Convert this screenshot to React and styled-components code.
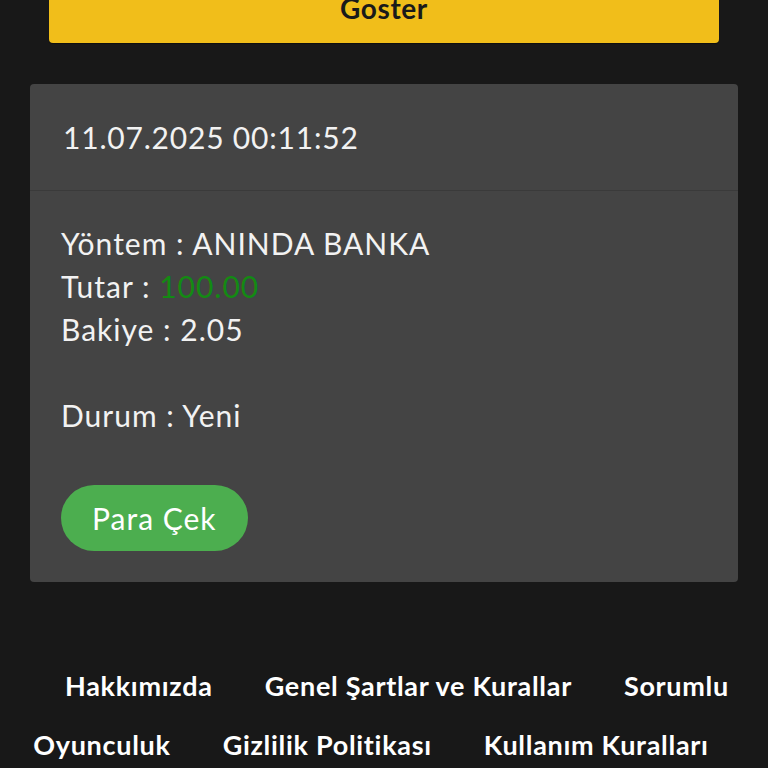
import React from 'react'
import styled, { createGlobalStyle } from 'styled-components'

const GlobalStyle = createGlobalStyle`
  html, body {
    margin: 0;
    padding: 0;
    background: #181818;
    font-family: Lato, "Noto Sans", sans-serif;
    overflow: hidden;
  }
`

const Page = styled.div`
  width: 768px;
  height: 768px;
  overflow: hidden;
  display: flex;
  flex-direction: column;
  & > * {
    flex-shrink: 0;
  }
`

const ShowButton = styled.button`
  margin: -27px 49px 0;
  height: 70px;
  border: none;
  border-radius: 4px;
  background: #f1be1a;
  color: #1a1a1a;
  font-family: inherit;
  font-size: 28px;
  font-weight: 700;
  letter-spacing: 0.6px;
  padding: 0;
  display: flex;
  align-items: center;
  justify-content: center;
  box-shadow: 0 1px 1px rgba(0, 0, 0, 0.4);
`

const Card = styled.section`
  margin: 41px 30px 0;
  background: #444444;
  border-radius: 4px;
  color: #f2f2f2;
  letter-spacing: 0.8px;
`

const CardHeader = styled.div`
  height: 106px;
  padding: 0 33px;
  display: flex;
  align-items: center;
  font-size: 30px;
  border-bottom: 1px solid #3a3a3a;
`

const CardBody = styled.div`
  padding: 31px 31px 31px;
`

const InfoLine = styled.div`
  font-size: 30px;
  line-height: 43px;
  height: 43px;
  letter-spacing: 1px;
`

const Amount = styled.span`
  color: #138a13;
`

const Spacer = styled.div`
  height: 43px;
`

const WithdrawButton = styled.button`
  margin-top: 48px;
  height: 66px;
  padding: 0 31px;
  border: none;
  border-radius: 33px;
  background: #4cae4f;
  color: #ffffff;
  font-family: inherit;
  font-size: 30px;
  letter-spacing: 1px;
  display: block;
`

const Footer = styled.nav`
  margin-top: 74px;
  padding: 0 20px;
  text-align: center;
  font-size: 27px;
  line-height: 59px;
`

// $start / $end drop the outer margin on a link that is split over two lines
const FooterLink = styled.a`
  display: inline-block;
  color: #ffffff;
  font-size: 27px;
  line-height: 59px;
  font-weight: 700;
  letter-spacing: 0.7px;
  margin: 0 ${(p) => (p.$end ? 0 : 26)}px 0 ${(p) => (p.$start ? 0 : 26)}px;
  text-decoration: none;
`

export default function App() {
  return (
    <Page>
      <GlobalStyle />
      <ShowButton type="button">Goster</ShowButton>
      <Card>
        <CardHeader>11.07.2025 00:11:52</CardHeader>
        <CardBody>
          <InfoLine>Yöntem : ANINDA BANKA</InfoLine>
          <InfoLine>
            Tutar : <Amount>100.00</Amount>
          </InfoLine>
          <InfoLine>Bakiye : 2.05</InfoLine>
          <Spacer />
          <InfoLine>Durum : Yeni</InfoLine>
          <WithdrawButton type="button">Para Çek</WithdrawButton>
        </CardBody>
      </Card>
      <Footer>
        <FooterLink href="#">Hakkımızda</FooterLink>
        <FooterLink href="#">Genel Şartlar ve Kurallar</FooterLink>
        <FooterLink href="#" $end>Sorumlu</FooterLink>{' '}
        <FooterLink href="#" $start>Oyunculuk</FooterLink>
        <FooterLink href="#">Gizlilik Politikası</FooterLink>
        <FooterLink href="#">Kullanım Kuralları</FooterLink>
      </Footer>
    </Page>
  )
}
